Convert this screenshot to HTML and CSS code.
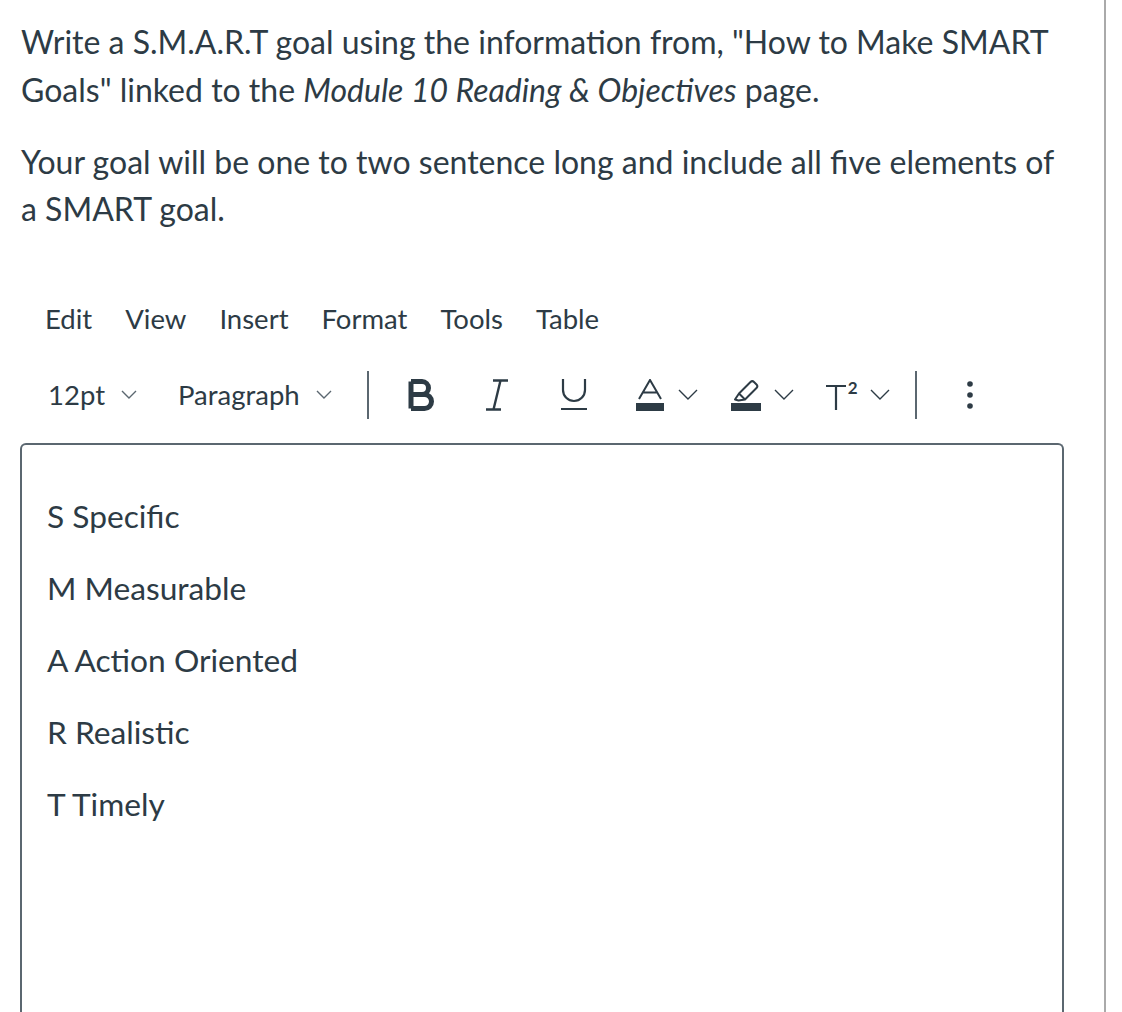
FILE: index.html
```html
<!DOCTYPE html>
<html lang="en">
<head>
<meta charset="utf-8">
<title>SMART goal</title>
<link rel="stylesheet" href="styles.css">
</head>
<body>
<div class="page">
  <div class="content">
    <p class="prompt">Write a S.M.A.R.T goal using the information from, "How to Make SMART Goals" linked to the <em>Module 10 Reading &amp; Objectives</em> page.</p>
    <p class="prompt">Your goal will be one to two sentence long and include all five elements of a SMART goal.</p>

    <div class="menubar">
      <span class="menu">Edit</span>
      <span class="menu">View</span>
      <span class="menu">Insert</span>
      <span class="menu">Format</span>
      <span class="menu">Tools</span>
      <span class="menu">Table</span>
    </div>

    <div class="toolbar">
      <span class="select size">12pt<svg class="chev-s" width="16" height="9" viewBox="0 0 16 9"><path d="M1 1 L8 8 L15 1" fill="none" stroke="#5b6770" stroke-width="1.4"/></svg></span>
      <span class="select para">Paragraph<svg class="chev-s" width="16" height="9" viewBox="0 0 16 9"><path d="M1 1 L8 8 L15 1" fill="none" stroke="#5b6770" stroke-width="1.4"/></svg></span>
      <span class="divider div1"></span>
      <svg class="ic ic-b" width="28" height="32" viewBox="0 0 28 32"><path d="M3 2.5 V29.5 M3 2.5 H14 A6.5 6.5 0 0 1 14 15.5 H3 M3 15.5 H16.5 A7 7 0 0 1 16.5 29.5 H3" fill="none" stroke="#2d3b45" stroke-width="5" stroke-linejoin="round"/></svg>
      <svg class="ic ic-i" width="24" height="32" viewBox="0 0 24 32"><path d="M8 1.5 H23 M1 30.5 H16 M15.5 1.5 L8.5 30.5" fill="none" stroke="#2d3b45" stroke-width="2.4"/></svg>
      <svg class="ic ic-u" width="26" height="32" viewBox="0 0 26 32"><path d="M2 0 V11 A11 11 0 0 0 24 11 V0 M0 30 H26" fill="none" stroke="#2d3b45" stroke-width="2.2"/></svg>
      <svg class="ic ic-a" width="28" height="32" viewBox="0 0 28 32"><path d="M3 20 L14 1 L25 20 M7 13.5 H21" fill="none" stroke="#2d3b45" stroke-width="2"/><rect x="0" y="24" width="28" height="8" fill="#2d3b45"/></svg>
      <svg class="chev chev-a" width="20" height="11" viewBox="0 0 20 11"><path d="M1 1 L10 10 L19 1" fill="none" stroke="#2d3b45" stroke-width="1.4"/></svg>
      <svg class="ic ic-h" width="30" height="32" viewBox="0 0 30 32"><path d="M4 20.5 L8 14.5 L19.5 3 A2.5 2.5 0 0 1 23 3 L25.5 5.5 A2.5 2.5 0 0 1 25.5 9 L14 20.5 L7.5 21.5 Z M8 14.5 L14 20.5" fill="none" stroke="#2d3b45" stroke-width="2" stroke-linejoin="round"/><rect x="0" y="24" width="30" height="8" fill="#2d3b45"/></svg>
      <svg class="chev chev-h" width="20" height="11" viewBox="0 0 20 11"><path d="M1 1 L10 10 L19 1" fill="none" stroke="#2d3b45" stroke-width="1.4"/></svg>
      <span class="tsup"><svg class="ic" width="21" height="32" viewBox="0 0 21 32"><path d="M0 7 H20 M10 7 V31" fill="none" stroke="#2d3b45" stroke-width="2.2"/></svg><span class="sup">2</span></span>
      <svg class="chev chev-t" width="20" height="11" viewBox="0 0 20 11"><path d="M1 1 L10 10 L19 1" fill="none" stroke="#2d3b45" stroke-width="1.4"/></svg>
      <span class="divider div2"></span>
      <svg class="ic ic-dots" width="10" height="32" viewBox="0 0 10 32"><circle cx="5" cy="5" r="2.8" fill="#2d3b45"/><circle cx="5" cy="16" r="2.8" fill="#2d3b45"/><circle cx="5" cy="27" r="2.8" fill="#2d3b45"/></svg>
    </div>

    <div class="editor">
      <p>S Specific</p>
      <p>M Measurable</p>
      <p>A Action Oriented</p>
      <p>R Realistic</p>
      <p>T Timely</p>
    </div>
  </div>
</div>
</body>
</html>
```

FILE: styles.css
```css
html, body {
  margin: 0;
  padding: 0;
  background: #ffffff;
  overflow: hidden;
}

body {
  font-family: Lato, "Open Sans", sans-serif;
  color: #2d3b45;
}

.page {
  width: 1104px;
  height: 1012px;
  border-right: 2px solid #aaaaaa;
  overflow: hidden;
}

.content {
  width: 1044px;
  padding: 18px 0 0 20px;
}

.prompt {
  font-size: 32px;
  line-height: 47.5px;
  margin: 0 0 24.5px 0;
  padding-left: 1px;
}

.prompt em {
  font-style: italic;
}

.menubar {
  display: flex;
  align-items: center;
  gap: 33px;
  height: 56px;
  margin-top: 58px;
  padding-left: 25px;
  font-size: 27.5px;
}

.toolbar {
  display: flex;
  align-items: center;
  height: 56px;
  margin-top: 20px;
  padding-left: 28px;
  font-size: 27.5px;
}

.select {
  display: inline-flex;
  align-items: center;
}

.chev-s {
  margin-left: 16px;
}

.para {
  margin-left: 41px;
}

.divider {
  display: inline-block;
  width: 2px;
  height: 48px;
  background: #5b6770;
}

.div1 { margin-left: 35px; }
.div2 { margin-left: 25px; }

.ic, .chev {
  display: block;
  flex: none;
}

.ic-b { margin-left: 39px; }
.ic-i { margin-left: 49px; }
.ic-u { margin-left: 52px; }
.ic-a { margin-left: 49px; }
.chev-a { margin-left: 14px; }
.ic-h { margin-left: 33px; }
.chev-h { margin-left: 13px; }
.chev-t { margin-left: 10px; }
.ic-dots { margin-left: 48px; }

.tsup {
  display: flex;
  align-items: flex-start;
  height: 32px;
  margin-left: 32px;
}

.sup {
  font-family: Lato, sans-serif;
  font-size: 17px;
  font-weight: 700;
  line-height: 17px;
  margin-left: 1px;
  width: 12px;
}

.editor {
  margin-top: 20px;
  border: 2px solid #5b6770;
  border-bottom: none;
  border-radius: 6px 6px 0 0;
  height: 600px;
  padding: 48px 0 0 25px;
  box-sizing: border-box;
}

.editor p {
  font-size: 31.7px;
  line-height: 47.5px;
  margin: 0 0 24.5px 0;
}
```
